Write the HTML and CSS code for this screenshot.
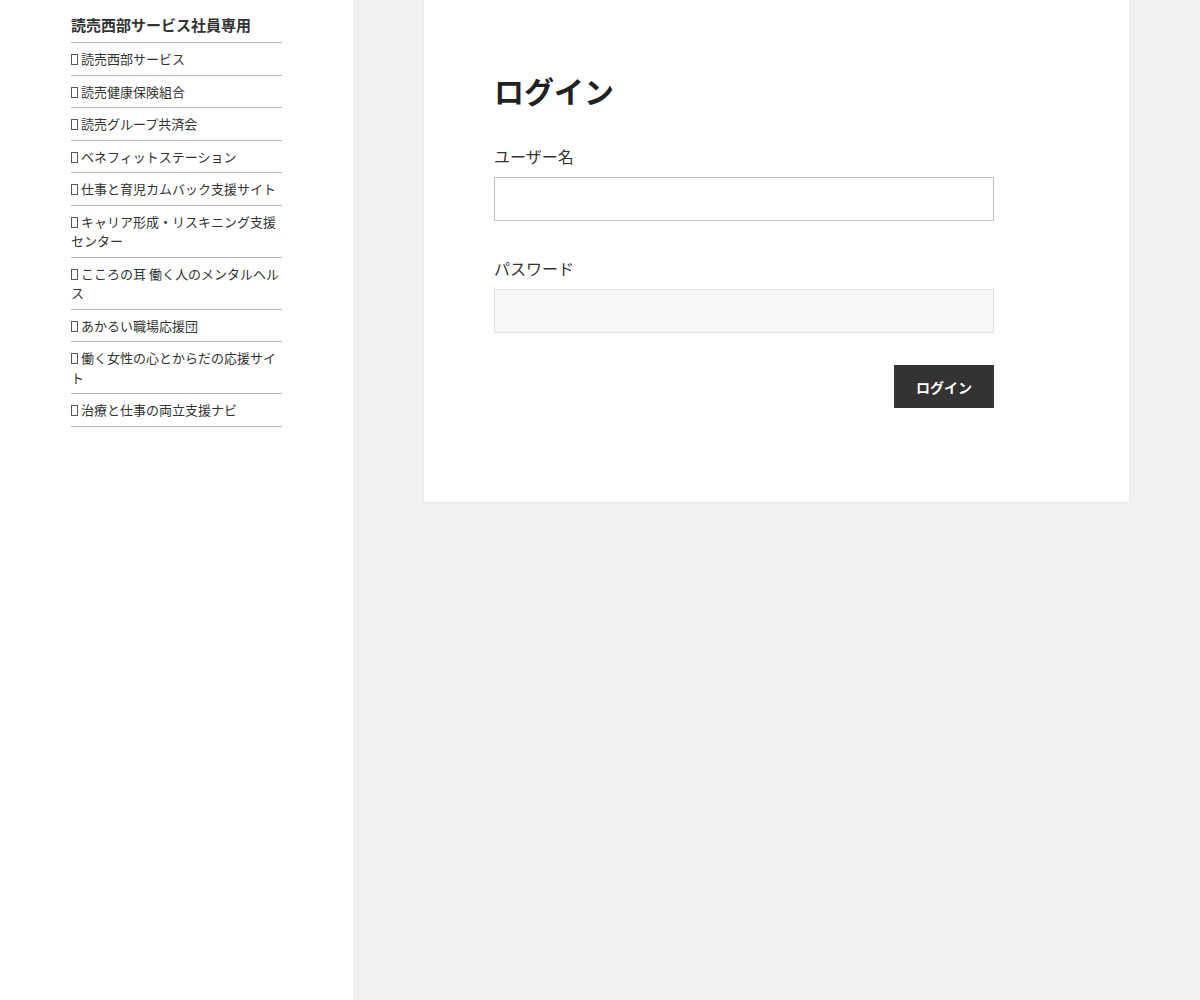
FILE: index.html
```html
<!DOCTYPE html>
<html lang="ja">
<head>
<meta charset="utf-8">
<title>ログイン</title>
<link rel="stylesheet" href="styles.css">
</head>
<body>
<div class="page">
  <aside class="sidebar">
    <div class="widget">
      <h2 class="widget-title">読売西部サービス社員専用</h2>
      <ul class="links">
        <li><a href="#"><span class="tofu"></span>読売西部サービス</a></li>
        <li><a href="#"><span class="tofu"></span>読売健康保険組合</a></li>
        <li><a href="#"><span class="tofu"></span>読売グループ共済会</a></li>
        <li><a href="#"><span class="tofu"></span>ベネフィットステーション</a></li>
        <li><a href="#"><span class="tofu"></span>仕事と育児カムバック支援サイト</a></li>
        <li><a href="#"><span class="tofu"></span>キャリア形成・リスキニング支援センター</a></li>
        <li><a href="#"><span class="tofu"></span>こころの耳 働く人のメンタルヘルス</a></li>
        <li><a href="#"><span class="tofu"></span>あかるい職場応援団</a></li>
        <li><a href="#"><span class="tofu"></span>働く女性の心とからだの応援サイト</a></li>
        <li><a href="#"><span class="tofu"></span>治療と仕事の両立支援ナビ</a></li>
      </ul>
    </div>
  </aside>
  <main class="main">
    <article class="card">
      <h1 class="title">ログイン</h1>
      <form class="login-form">
        <label class="field-label" for="user">ユーザー名</label>
        <input class="field-input focused" id="user" type="text">
        <label class="field-label" for="pass">パスワード</label>
        <input class="field-input" id="pass" type="password">
        <div class="actions">
          <button type="button" class="btn">ログイン</button>
        </div>
      </form>
    </article>
  </main>
</div>
</body>
</html>
```

FILE: styles.css
```css
html, body {
  margin: 0;
  padding: 0;
  height: 100%;
}
body {
  background: #f1f1f1;
  color: #333;
  font-family: "Noto Sans CJK JP", "Noto Sans", sans-serif;
}
.page {
  display: flex;
  min-height: 1000px;
}
.sidebar {
  width: 353px;
  flex: none;
  background: #fff;
  padding-left: 71px;
  box-sizing: border-box;
}
.widget {
  width: 211px;
}
.widget-title {
  margin: 14px 0 0;
  padding-bottom: 6px;
  font-size: 15px;
  line-height: 22px;
  font-weight: 700;
  border-bottom: 1px solid #b8b8b8;
}
.links {
  list-style: none;
  margin: 0;
  padding: 0;
}
.links li {
  padding: 6px 0;
  border-bottom: 1px solid #b8b8b8;
  font-size: 13px;
  line-height: 19.5px;
}
.links a {
  color: #333;
  text-decoration: none;
}
.tofu {
  display: inline-block;
  width: 5px;
  height: 9px;
  border: 1px solid #555;
  margin-right: 3px;
  vertical-align: -1px;
}
.main {
  flex: 1;
  padding-left: 71px;
}
.card {
  width: 705px;
  background: #fff;
  box-shadow: 0 0 1px rgba(0, 0, 0, 0.15);
  padding: 70px 70px 94px;
  box-sizing: border-box;
}
.title {
  margin: 0;
  font-size: 30px;
  line-height: 40px;
  font-weight: 700;
  color: #222;
}
.login-form {
  display: flex;
  flex-direction: column;
  width: 500px;
  margin-top: 34px;
}
.field-label {
  font-size: 16px;
  line-height: 24px;
  margin-bottom: 9px;
}
.field-input {
  height: 44px;
  box-sizing: border-box;
  border: 1px solid #e3e3e3;
  background: #f7f7f7;
  margin: 0 0 35px;
  padding: 0 10px;
  font-size: 16px;
  outline: none;
}
.field-input.focused {
  background: #fff;
  border-color: #c2c2c2;
}
.actions {
  display: flex;
  justify-content: flex-end;
  margin-top: -3px;
}
.btn {
  width: 100px;
  height: 43px;
  background: #333;
  color: #fff;
  border: none;
  font-family: "Noto Sans CJK JP", "Noto Sans", sans-serif;
  font-size: 14px;
  font-weight: 700;
  padding: 0;
}
```
